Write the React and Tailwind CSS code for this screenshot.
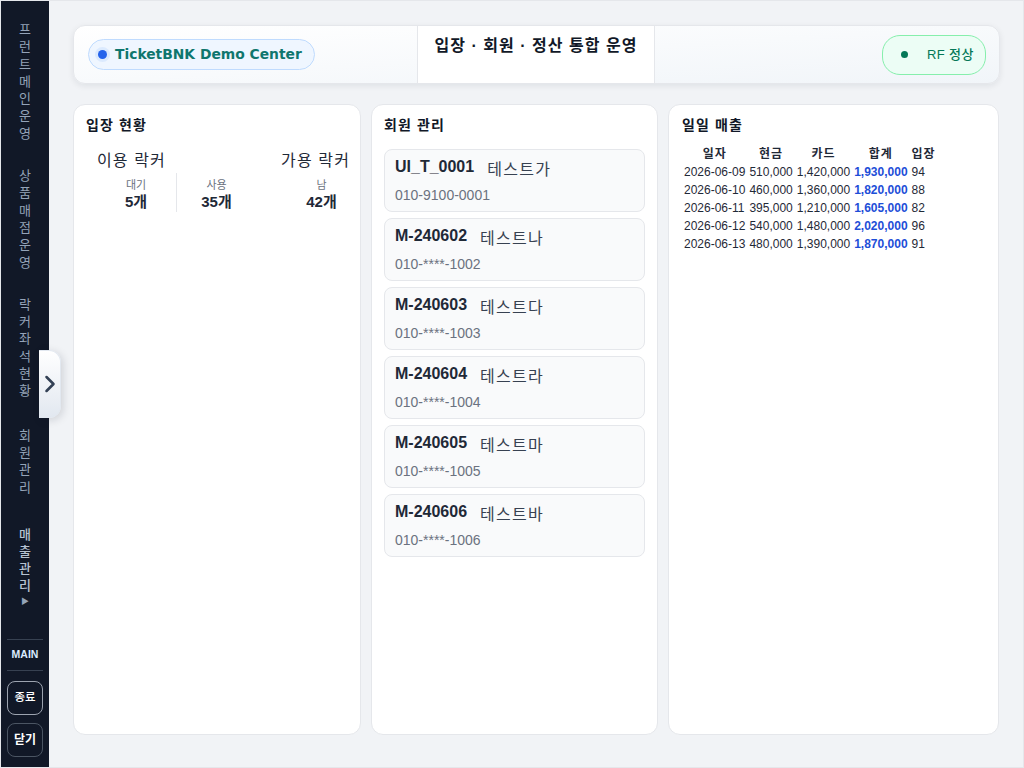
import { ChevronRight } from 'lucide-react'

const navItems = [
  { label: '프런트메인운영', cls: '' },
  { label: '상품매점운영', cls: '' },
  { label: '락커좌석현황', cls: '' },
  { label: '회원관리', cls: 'mt-[2px]' },
]

const members = [
  { id: 'UI_T_0001', name: '테스트가', phone: '010-9100-0001' },
  { id: 'M-240602', name: '테스트나', phone: '010-****-1002' },
  { id: 'M-240603', name: '테스트다', phone: '010-****-1003' },
  { id: 'M-240604', name: '테스트라', phone: '010-****-1004' },
  { id: 'M-240605', name: '테스트마', phone: '010-****-1005' },
  { id: 'M-240606', name: '테스트바', phone: '010-****-1006' },
]

const sales = [
  ['2026-06-09', '510,000', '1,420,000', '1,930,000', '94'],
  ['2026-06-10', '460,000', '1,360,000', '1,820,000', '88'],
  ['2026-06-11', '395,000', '1,210,000', '1,605,000', '82'],
  ['2026-06-12', '540,000', '1,480,000', '2,020,000', '96'],
  ['2026-06-13', '480,000', '1,390,000', '1,870,000', '91'],
]

function Sidebar() {
  return (
    <aside className="flex w-[48px] shrink-0 flex-col items-center bg-[#111827]">
      <nav className="flex flex-1 flex-col items-center gap-[25px] pt-[20px]">
        {navItems.map((item) => (
          <div key={item.label} className={`w-[14px] break-all text-center text-[13px] leading-[17.3px] text-[#94a3b8] ${item.cls}`}>
            {item.label}
          </div>
        ))}
        <div className="mt-[5px] flex flex-col items-center">
          <div className="w-[14px] break-all text-center text-[13px] font-medium leading-[17.2px] text-[#b6c2d1]">매출관리</div>
          <span className="mt-[1px] text-[8px] leading-[12px] text-[#94a3b8]">▶</span>
        </div>
      </nav>
      <div className="flex w-[36px] flex-col items-center pb-[10px]">
        <div className="w-full border-y border-[#374151] pb-[9px] pt-[7px] text-center text-[10.5px] font-bold leading-[14px] text-[#dbeafe]">MAIN</div>
        <button type="button" className="mt-[10px] h-[34px] w-full rounded-lg border border-[#9ca3af] text-[11.5px] font-medium text-white">종료</button>
        <button type="button" className="mt-[8px] h-[34px] w-full rounded-lg border border-[#4b5563] text-[12px] font-bold text-white">닫기</button>
      </div>
    </aside>
  )
}

function Header() {
  return (
    <header className="grid h-[59px] grid-cols-[343px_238px_1fr] rounded-xl border border-[#e5e7eb] bg-gradient-to-br from-white to-[#f1f5f9] shadow-[0_2px_6px_rgba(15,23,42,0.08)]">
      <div className="flex items-center pl-[14px]">
        <div className="flex h-[31px] items-center gap-[8px] rounded-full border border-[#bfdbfe] bg-[#eff6ff] pl-[9px] pr-[12px]">
          <span className="h-[9px] w-[9px] rounded-full bg-[#2563eb] shadow-[0_0_0_3px_#dbeafe]" />
          <span className="font-['DejaVu_Sans',sans-serif] text-[13.85px] font-bold text-[#0f766e]">TicketBNK Demo Center</span>
        </div>
      </div>
      <div className="border-x border-[#e5e7eb] bg-white pt-[8px] text-center text-[16px] font-bold leading-[24px] tracking-[0.065em] text-[#111827]">
        입장 · 회원 · 정산 통합 운영
      </div>
      <div className="flex items-center justify-end pr-[13px]">
        <div className="flex h-[40px] w-[104px] items-center gap-[19px] rounded-[18px] border border-[#86efac] bg-[#ecfdf5] pl-[18px] text-[13px] font-medium tracking-[0.03em] text-[#047857]">
          <span className="h-[7px] w-[7px] rounded-full bg-[#047857]" />
          <span>RF 정상</span>
        </div>
      </div>
    </header>
  )
}

function PanelTitle({ children }) {
  return <h2 className="text-[14px] font-bold leading-[20px] tracking-[0.08em] text-[#111827]">{children}</h2>
}

function EntryPanel() {
  return (
    <section className="rounded-xl border border-[#e5e7eb] bg-white px-[12px] pt-[10px]">
      <PanelTitle>입장 현황</PanelTitle>
      <div className="mt-[15px] flex justify-between pl-[11px] text-[16px] leading-[22px] tracking-[0.07em] text-[#1f2937]">
        <span>이용 락커</span>
        <span className="-mr-[2px]">가용 락커</span>
      </div>
      <div className="mt-[1px] grid grid-cols-[90px_82px_1fr] text-center">
        <div className="pl-[10px] pt-[5px]">
          <div className="text-[11px] leading-[15px] text-[#6b7280]">대기</div>
          <div className="text-[15px] font-bold leading-[17px] text-[#1f2937]">5개</div>
        </div>
        <div className="h-[39px] border-l border-[#e5e7eb] pr-[2px] pt-[5px]">
          <div className="text-[11px] leading-[15px] text-[#6b7280]">사용</div>
          <div className="text-[15px] font-bold leading-[17px] text-[#1f2937]">35개</div>
        </div>
        <div className="pl-[37px] pt-[5px]">
          <div className="text-[11px] leading-[15px] text-[#6b7280]">남</div>
          <div className="text-[15px] font-bold leading-[17px] text-[#1f2937]">42개</div>
        </div>
      </div>
    </section>
  )
}

function MemberPanel() {
  return (
    <section className="rounded-xl border border-[#e5e7eb] bg-white px-[12px] pt-[10px]">
      <PanelTitle>회원 관리</PanelTitle>
      <ul className="mt-[14px] flex flex-col gap-[6px]">
        {members.map((member) => (
          <li key={member.id} className="h-[63px] rounded-lg border border-[#e5e7eb] bg-[#f9fafb] px-[10px] pt-[5px]">
            <div className="flex items-start gap-[13px]">
              <strong className="text-[16px] font-bold leading-[24px] text-[#1f2937]">{member.id}</strong>
              <span className="mt-[3px] text-[16px] leading-[24px] tracking-[0.08em] text-[#374151]">{member.name}</span>
            </div>
            <div className="mt-[3px] text-[14px] leading-[20px] text-[#6b7280]">{member.phone}</div>
          </li>
        ))}
      </ul>
    </section>
  )
}

function SalesPanel() {
  return (
    <section className="rounded-xl border border-[#e5e7eb] bg-white px-[13px] pt-[10px]">
      <PanelTitle>일일 매출</PanelTitle>
      <table className="mt-[9px] border-separate border-spacing-0 text-[12px] text-[#1f2937]">
        <thead>
          <tr className="h-[19px]">
            {['일자', '현금', '카드', '합계', '입장'].map((col) => (
              <th key={col} className="px-[2px] text-center font-semibold tracking-[0.08em]">{col}</th>
            ))}
          </tr>
        </thead>
        <tbody>
          {sales.map(([date, cash, card, total, count]) => (
            <tr key={date} className="h-[18px]">
              <td className="px-[2px]">{date}</td>
              <td className="px-[2px]">{cash}</td>
              <td className="px-[2px]">{card}</td>
              <td className="px-[2px] font-bold text-[#1d4ed8]">{total}</td>
              <td className="px-[2px]">{count}</td>
            </tr>
          ))}
        </tbody>
      </table>
    </section>
  )
}

export default function App() {
  return (
    <div className="relative flex h-[768px] w-[1024px] overflow-hidden border border-[#e5e7eb] bg-[#f1f3f6] font-['Liberation_Sans','Noto_Sans_CJK_KR',sans-serif]">
      <Sidebar />
      <button
        type="button"
        className="absolute left-[38px] top-[349px] flex h-[68px] w-[22px] items-center justify-center rounded-r-xl border border-l-0 border-[#e2e8f0] bg-gradient-to-b from-white to-[#e2e8f0] shadow-[2px_2px_8px_rgba(15,23,42,0.15)]"
      >
        <ChevronRight size={28} strokeWidth={2.2} className="shrink-0 text-[#334155]" />
      </button>
      <main className="flex min-w-0 flex-1 flex-col gap-[20px] pb-[32px] pl-[24px] pr-[23px] pt-[24px]">
        <Header />
        <div className="grid flex-1 grid-cols-[288px_287px_331px] gap-[10px]">
          <EntryPanel />
          <MemberPanel />
          <SalesPanel />
        </div>
      </main>
    </div>
  )
}
